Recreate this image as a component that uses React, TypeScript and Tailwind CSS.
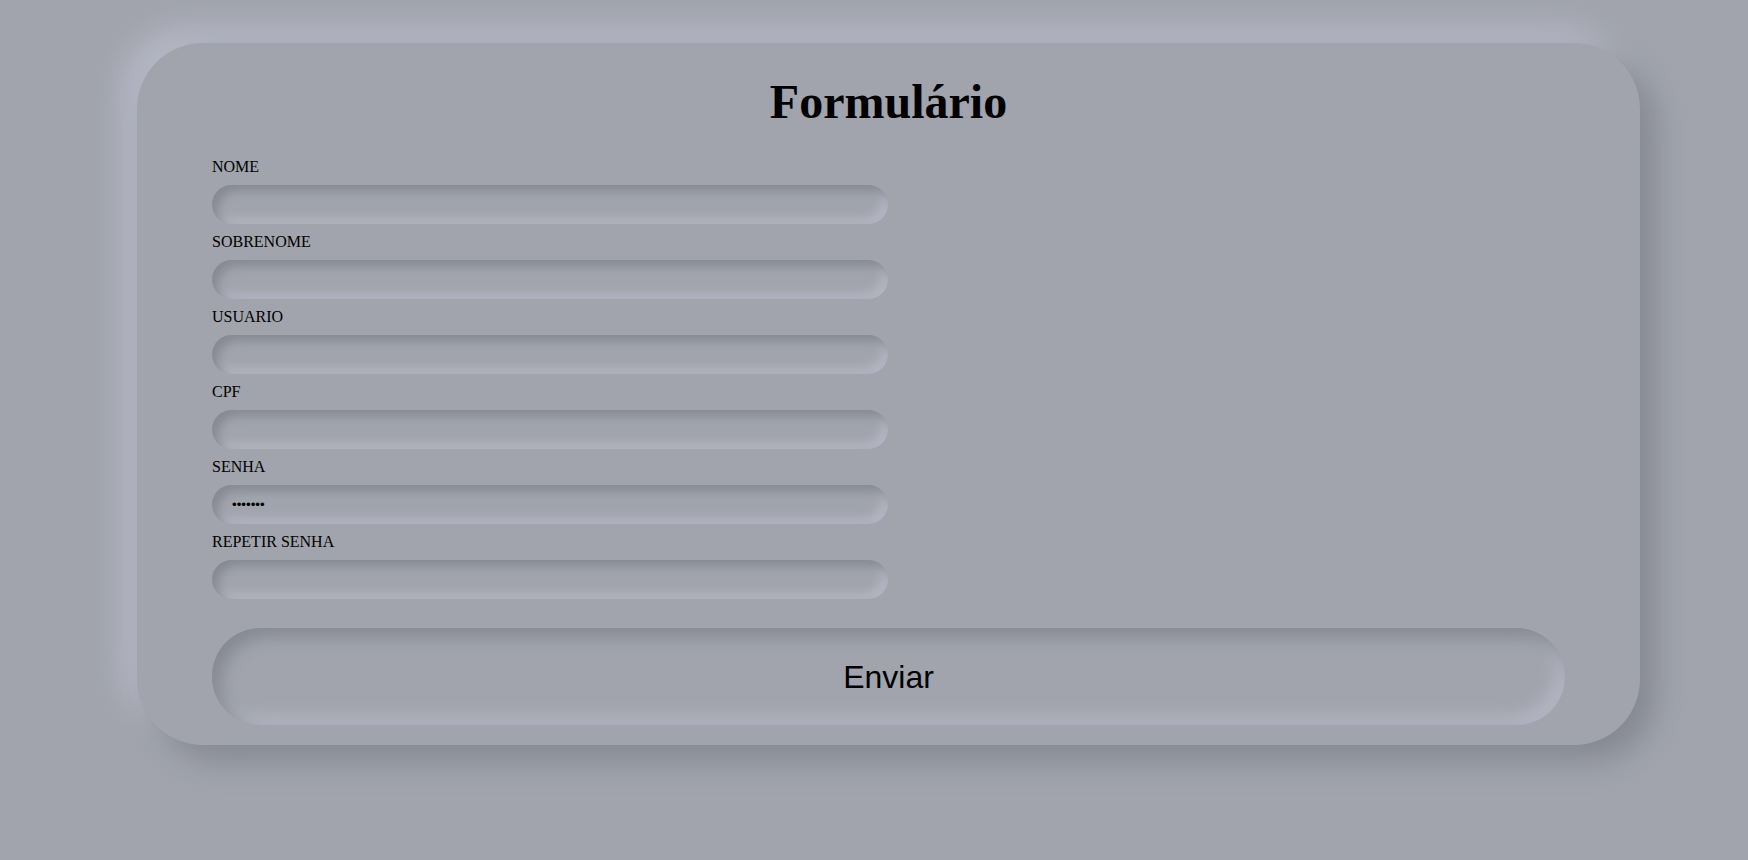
const fields: { label: string; type: string; value?: string }[] = [
  { label: "NOME", type: "text" },
  { label: "SOBRENOME", type: "text" },
  { label: "USUARIO", type: "text" },
  { label: "CPF", type: "text" },
  { label: "SENHA", type: "password", value: "1234567" },
  { label: "REPETIR SENHA", type: "password" },
];

export default function App() {
  return (
    <div className="min-h-screen w-full bg-[#a1a4ad] pt-[43px] pb-[115px] text-black">
      <form
        onSubmit={(e) => e.preventDefault()}
        className="ml-[137px] flex w-[1503px] flex-col rounded-[66px] bg-[#a1a4ad] px-[75px] pt-[31px] pb-[20px] shadow-[16px_16px_30px_#868992,-16px_-16px_30px_#b6b8c6]"
      >
        <h1 className="text-center font-['Liberation_Serif',serif] text-[48px] leading-[55px] font-bold">
          Formulário
        </h1>

        <div className="mt-[29px] flex flex-col gap-[9px]">
          {fields.map((f) => (
            <div key={f.label} className="flex flex-col">
              <label className="font-['Liberation_Serif',serif] text-[16px] leading-[18px]">
                {f.label}
              </label>
              <input
                type={f.type}
                defaultValue={f.value}
                className="mt-[9px] h-[39px] w-[676px] rounded-[20px] bg-[#a1a4ad] px-[20px] font-['Liberation_Sans',sans-serif] text-[13.33px] text-black shadow-[inset_6px_6px_10px_#878a93,inset_-6px_-6px_10px_#b3b5c2] outline-none"
              />
            </div>
          ))}
        </div>

        <button
          type="submit"
          className="mt-[29px] h-[97px] w-full rounded-[48px] bg-[#a1a4ad] font-['Liberation_Sans',sans-serif] text-[32px] text-black shadow-[inset_9px_9px_16px_#878a93,inset_-9px_-9px_16px_#b3b5c2]"
        >
          Enviar
        </button>
      </form>
    </div>
  );
}
